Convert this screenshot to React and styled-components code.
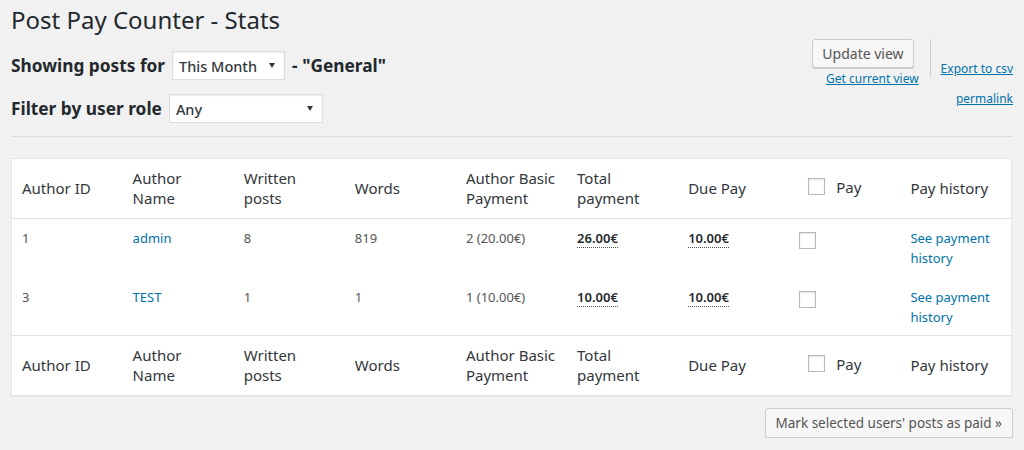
import React from "react";
import styled, { createGlobalStyle } from "styled-components";

const Global = createGlobalStyle`
  html, body { margin: 0; padding: 0; background: #f1f1f1; }
  body { font-family: "Noto Sans", "Open Sans", sans-serif; color: #32373c; }
  * { box-sizing: border-box; }
`;

const Wrap = styled.div`
  padding: 0 11px;
  width: 1024px;
`;

const Title = styled.h1`
  margin: 0;
  padding: 5px 0 0 0;
  font-size: 24px;
  font-weight: 400;
  line-height: 29px;
  color: #23282d;
`;

const TopArea = styled.div`
  display: flex;
  justify-content: space-between;
  align-items: flex-start;
  border-bottom: 1px solid #ddd;
  padding-bottom: 13px;
`;

const Filters = styled.div`
  display: flex;
  flex-direction: column;
  gap: 14px;
  padding-top: 17px;
`;

const FilterRow = styled.div`
  display: flex;
  align-items: center;
  gap: 7px;
  font-size: 17.3px;
  font-weight: 700;
  color: #23282d;
`;

const Select = styled.div`
  width: ${(p) => p.$w}px;
  height: 29px;
  background: #fff;
  border: 1px solid #ddd;
  box-shadow: inset 0 1px 2px rgba(0,0,0,0.07);
  display: flex;
  align-items: center;
  justify-content: space-between;
  padding: 0 9px 0 6px;
  font-size: 14.5px;
  font-weight: 500;
  color: #32373c;
  &::after {
    content: "";
    border-left: 3px solid transparent;
    border-right: 3px solid transparent;
    border-top: 5px solid #32373c;
  }
`;

const Actions = styled.div`
  display: flex;
  padding-top: 5px;
`;

const ViewCol = styled.div`
  display: flex;
  flex-direction: column;
  align-items: flex-end;
  padding-right: 16px;
`;

const Button = styled.button`
  font-family: inherit;
  font-size: ${(p) => p.$fs || 14}px;
  color: #555;
  background: #f7f7f7;
  border: 1px solid #ccc;
  border-radius: 3px;
  box-shadow: 0 1px 0 #ccc;
  height: ${(p) => p.$h || 29}px;
  padding: 0 ${(p) => p.$px || 10}px;
  cursor: pointer;
  white-space: nowrap;
`;

const Link = styled.a`
  color: #0073aa;
  text-decoration: underline;
  font-size: 12px;
  line-height: 14px;
  cursor: pointer;
`;

const ViewLink = styled(Link)`
  margin-top: 4px;
  margin-right: -5px;
`;

const Sep = styled.div`
  width: 1px;
  height: 38px;
  background: #ccc;
`;

const ExportCol = styled.div`
  display: flex;
  flex-direction: column;
  align-items: flex-end;
  gap: 16px;
  padding-left: 10px;
  margin-top: 23px;
`;

const Table = styled.table`
  margin-top: 21px;
  width: 1001px;
  border-collapse: collapse;
  background: #fff;
  border: 1px solid #e5e5e5;
  box-shadow: 0 1px 1px rgba(0,0,0,0.04);
  table-layout: fixed;
`;

const Th = styled.th`
  text-align: left;
  font-weight: 400;
  font-size: 15px;
  line-height: 20px;
  color: #32373c;
  padding: 9px 10px 10px 10px;
  height: 59px;
  vertical-align: middle;
`;

const HeadRow = styled.tr`
  border-bottom: 1px solid #e1e1e1;
`;

const FootRow = styled.tr`
  border-top: 1px solid #e1e1e1;
`;

const Td = styled.td`
  font-size: 13px;
  line-height: 20px;
  color: #555;
  padding: 9px 10px 8px 10px;
  vertical-align: top;
  height: ${(p) => p.$h}px;
`;

const NameLink = styled.a`
  color: #0073aa;
  text-decoration: none;
`;

const Amount = styled.span`
  color: #23282d;
  font-weight: 600;
  border-bottom: 1px dotted #555;
`;

const Check = styled.span`
  display: inline-block;
  width: 17px;
  height: 17px;
  border: 1px solid #b4b9be;
  background: #fff;
  box-shadow: inset 0 1px 2px rgba(0,0,0,0.1);
  vertical-align: middle;
  margin: ${(p) => p.$m || 0};
`;

const PayHead = styled.span`
  display: inline-flex;
  align-items: center;
  gap: 11px;
  padding-left: 9px;
`;

const Bottom = styled.div`
  display: flex;
  justify-content: flex-end;
  padding-top: 12px;
`;

const cols = ["Author ID", "Author Name", "Written posts", "Words", "Author Basic Payment", "Total payment", "Due Pay"];

const HeaderCells = () => (
  <>
    {cols.map((c) => (
      <Th key={c}>{c}</Th>
    ))}
    <Th>
      <PayHead>
        <Check />
        Pay
      </PayHead>
    </Th>
    <Th>Pay history</Th>
  </>
);

const rows = [
  { id: 1, name: "admin", posts: 8, words: 819, basic: "2 (20.00€)", total: "26.00€", due: "10.00€", h: 59 },
  { id: 3, name: "TEST", posts: 1, words: 1, basic: "1 (10.00€)", total: "10.00€", due: "10.00€", h: 58 },
];

export default function App() {
  return (
    <Wrap>
      <Global />
      <Title>Post Pay Counter - Stats</Title>
      <TopArea>
        <Filters>
          <FilterRow>
            Showing posts for
            <Select $w={113}>This Month</Select>
            - "General"
          </FilterRow>
          <FilterRow>
            Filter by user role
            <Select $w={154}>Any</Select>
          </FilterRow>
        </Filters>
        <Actions>
          <ViewCol>
            <Button $px={9}>Update view</Button>
            <ViewLink>Get current view</ViewLink>
          </ViewCol>
          <Sep />
          <ExportCol>
            <Link>Export to csv</Link>
            <Link>permalink</Link>
          </ExportCol>
        </Actions>
      </TopArea>
      <Table>
        <thead>
          <HeadRow>
            <HeaderCells />
          </HeadRow>
        </thead>
        <tbody>
          {rows.map((r) => (
            <tr key={r.id}>
              <Td $h={r.h}>{r.id}</Td>
              <Td $h={r.h}>
                <NameLink>{r.name}</NameLink>
              </Td>
              <Td $h={r.h}>{r.posts}</Td>
              <Td $h={r.h}>{r.words}</Td>
              <Td $h={r.h}>{r.basic}</Td>
              <Td $h={r.h}>
                <Amount>{r.total}</Amount>
              </Td>
              <Td $h={r.h}>
                <Amount>{r.due}</Amount>
              </Td>
              <Td $h={r.h}>
                <Check $m="2px 0 0 0" />
              </Td>
              <Td $h={r.h}>
                <NameLink>See payment history</NameLink>
              </Td>
            </tr>
          ))}
        </tbody>
        <tfoot>
          <FootRow>
            <HeaderCells />
          </FootRow>
        </tfoot>
      </Table>
      <Bottom>
        <Button $h={30} $fs={13.5}>Mark selected users' posts as paid »</Button>
      </Bottom>
    </Wrap>
  );
}
